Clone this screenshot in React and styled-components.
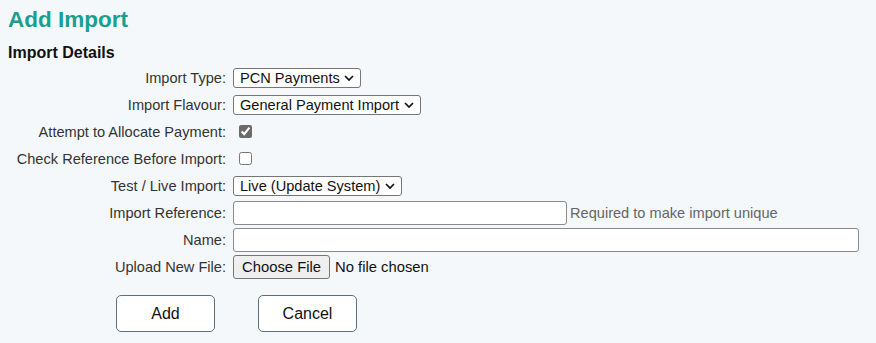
import styled, { createGlobalStyle } from 'styled-components';

const GlobalStyle = createGlobalStyle`
  html, body {
    margin: 0;
    padding: 0;
    background: #f5f8fa;
    font-family: "Liberation Sans", Arial, sans-serif;
  }
`;

const Page = styled.div`
  padding: 6px 8px 8px;
  color: #333;
`;

const Title = styled.h1`
  margin: 0;
  font-size: 22.5px;
  line-height: 28px;
  font-weight: bold;
  color: #17a08f;
`;

const Section = styled.h2`
  margin: 9px 0 0;
  font-size: 16px;
  line-height: 20px;
  font-weight: bold;
  color: #111;
`;

const Form = styled.form`
  display: grid;
  grid-template-columns: 218px 1fr;
  grid-auto-rows: 27px;
  column-gap: 7px;
  align-items: center;
  margin-top: 1px;
  font-size: 14.6px;
`;

const Label = styled.label`
  text-align: right;
  color: #333;
  white-space: nowrap;
`;

const Field = styled.div`
  display: flex;
  align-items: center;
  gap: 3px;
`;

const SelectWrap = styled.div`
  position: relative;
  display: inline-flex;
  width: ${p => p.$w}px;
`;

const Select = styled.select`
  appearance: none;
  box-sizing: border-box;
  width: 100%;
  height: 20px;
  margin: 0;
  padding: 0 20px 0 6px;
  font-family: "Liberation Sans", Arial, sans-serif;
  font-size: 14.6px;
  color: #111;
  border: 1px solid #767676;
  border-radius: 3px;
  background: #fff;
`;

const Chevron = styled.svg`
  position: absolute;
  right: 7px;
  top: 7px;
  width: 10px;
  height: 6px;
  pointer-events: none;
`;

const Check = styled.input.attrs({ type: 'checkbox' })`
  width: 13px;
  height: 13px;
  margin: 0 0 0 6px;
  accent-color: #6b6b6b;
`;

const TextInput = styled.input.attrs({ type: 'text' })`
  box-sizing: border-box;
  width: ${p => p.$w}px;
  height: 24px;
  margin: 0;
  border: 1px solid #8a8a8a;
  border-radius: 3px;
  background: #fff;
  font-family: "Liberation Sans", Arial, sans-serif;
  font-size: 14.6px;
`;

const Hint = styled.span`
  color: #666;
  font-size: 14.6px;
`;

const FileInput = styled.input.attrs({ type: 'file' })`
  font-family: "Liberation Sans", Arial, sans-serif;
  font-size: 14.8px;
  color: #111;
  margin: 0;

  &::file-selector-button {
    font-family: "Liberation Sans", Arial, sans-serif;
    font-size: 14.8px;
    height: 24px;
    width: 97px;
    margin-right: 5px;
    border: 1px solid #767676;
    border-radius: 3px;
    background: #efefef;
    color: #111;
  }
`;

const Actions = styled.div`
  display: flex;
  gap: 43px;
  margin: 15px 0 0 108px;
`;

const Button = styled.button`
  width: 99px;
  height: 37px;
  background: #fff;
  border: 1.5px solid #5a707c;
  border-radius: 5px;
  font-family: "Liberation Sans", Arial, sans-serif;
  font-size: 16px;
  color: #111;
`;

const Dropdown = ({ width, children, ...rest }) => (
  <SelectWrap $w={width}>
    <Select {...rest}>{children}</Select>
    <Chevron viewBox="0 0 10 6">
      <polyline points="1,1 5,5 9,1" fill="none" stroke="#111" strokeWidth="1.7" />
    </Chevron>
  </SelectWrap>
);

export default function App() {
  return (
    <Page>
      <GlobalStyle />
      <Title>Add Import</Title>
      <Section>Import Details</Section>
      <Form onSubmit={e => e.preventDefault()}>
        <Label>Import Type:</Label>
        <Field>
          <Dropdown width={128} defaultValue="pcn">
            <option value="pcn">PCN Payments</option>
          </Dropdown>
        </Field>

        <Label>Import Flavour:</Label>
        <Field>
          <Dropdown width={188} defaultValue="general">
            <option value="general">General Payment Import</option>
          </Dropdown>
        </Field>

        <Label>Attempt to Allocate Payment:</Label>
        <Field>
          <Check defaultChecked />
        </Field>

        <Label>Check Reference Before Import:</Label>
        <Field>
          <Check />
        </Field>

        <Label>Test / Live Import:</Label>
        <Field>
          <Dropdown width={169} defaultValue="live">
            <option value="live">Live (Update System)</option>
            <option value="test">Test</option>
          </Dropdown>
        </Field>

        <Label>Import Reference:</Label>
        <Field>
          <TextInput $w={334} />
          <Hint>Required to make import unique</Hint>
        </Field>

        <Label>Name:</Label>
        <Field>
          <TextInput $w={626} />
        </Field>

        <Label>Upload New File:</Label>
        <Field>
          <FileInput />
        </Field>
      </Form>
      <Actions>
        <Button type="button">Add</Button>
        <Button type="button">Cancel</Button>
      </Actions>
    </Page>
  );
}
